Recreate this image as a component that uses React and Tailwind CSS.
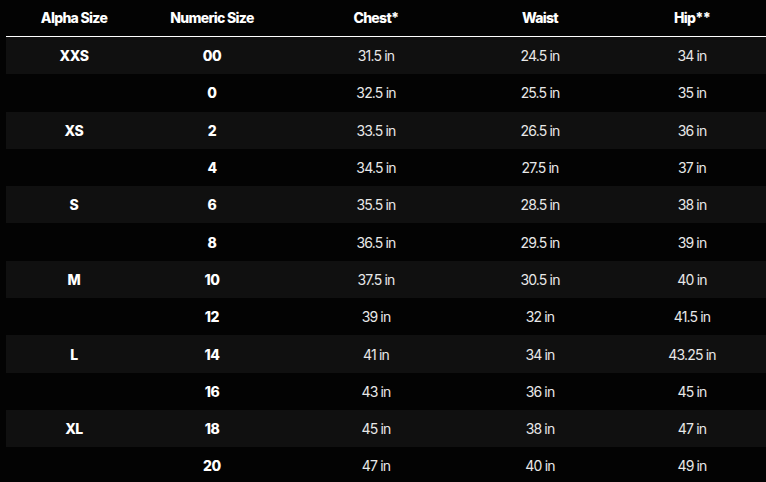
const rows = [
  ["XXS", "00", "31.5 in", "24.5 in", "34 in"],
  ["", "0", "32.5 in", "25.5 in", "35 in"],
  ["XS", "2", "33.5 in", "26.5 in", "36 in"],
  ["", "4", "34.5 in", "27.5 in", "37 in"],
  ["S", "6", "35.5 in", "28.5 in", "38 in"],
  ["", "8", "36.5 in", "29.5 in", "39 in"],
  ["M", "10", "37.5 in", "30.5 in", "40 in"],
  ["", "12", "39 in", "32 in", "41.5 in"],
  ["L", "14", "41 in", "34 in", "43.25 in"],
  ["", "16", "43 in", "36 in", "45 in"],
  ["XL", "18", "45 in", "38 in", "47 in"],
  ["", "20", "47 in", "40 in", "49 in"],
];

const cols = "grid grid-cols-[136px_140px_188px_140px_164px]";

export default function App() {
  return (
    <div className="w-[766px] h-[482px] overflow-hidden bg-[#030303] font-['Inter',sans-serif] text-[14px]">
      <div className="w-[768px] ml-[6px]">
        <div className={`${cols} h-[37px] pb-[2px] items-center text-center font-extrabold text-white tracking-[-0.05em] border-b border-white`}>
          <div>Alpha Size</div>
          <div>Numeric Size</div>
          <div>Chest*</div>
          <div>Waist</div>
          <div>Hip**</div>
        </div>
        {rows.map((r, i) => (
          <div
            key={i}
            className={`${cols} h-[37.3px] items-center text-center ${i % 2 === 0 ? "bg-[#101010]" : ""}`}
          >
            <div className="font-extrabold text-white tracking-[-0.03em]">{r[0]}</div>
            <div className="font-extrabold text-white tracking-[-0.03em]">{r[1]}</div>
            <div className="text-[#e8e8e8] tracking-[-0.06em]">{r[2]}</div>
            <div className="text-[#e8e8e8] tracking-[-0.06em]">{r[3]}</div>
            <div className="text-[#e8e8e8] tracking-[-0.06em]">{r[4]}</div>
          </div>
        ))}
      </div>
    </div>
  );
}
